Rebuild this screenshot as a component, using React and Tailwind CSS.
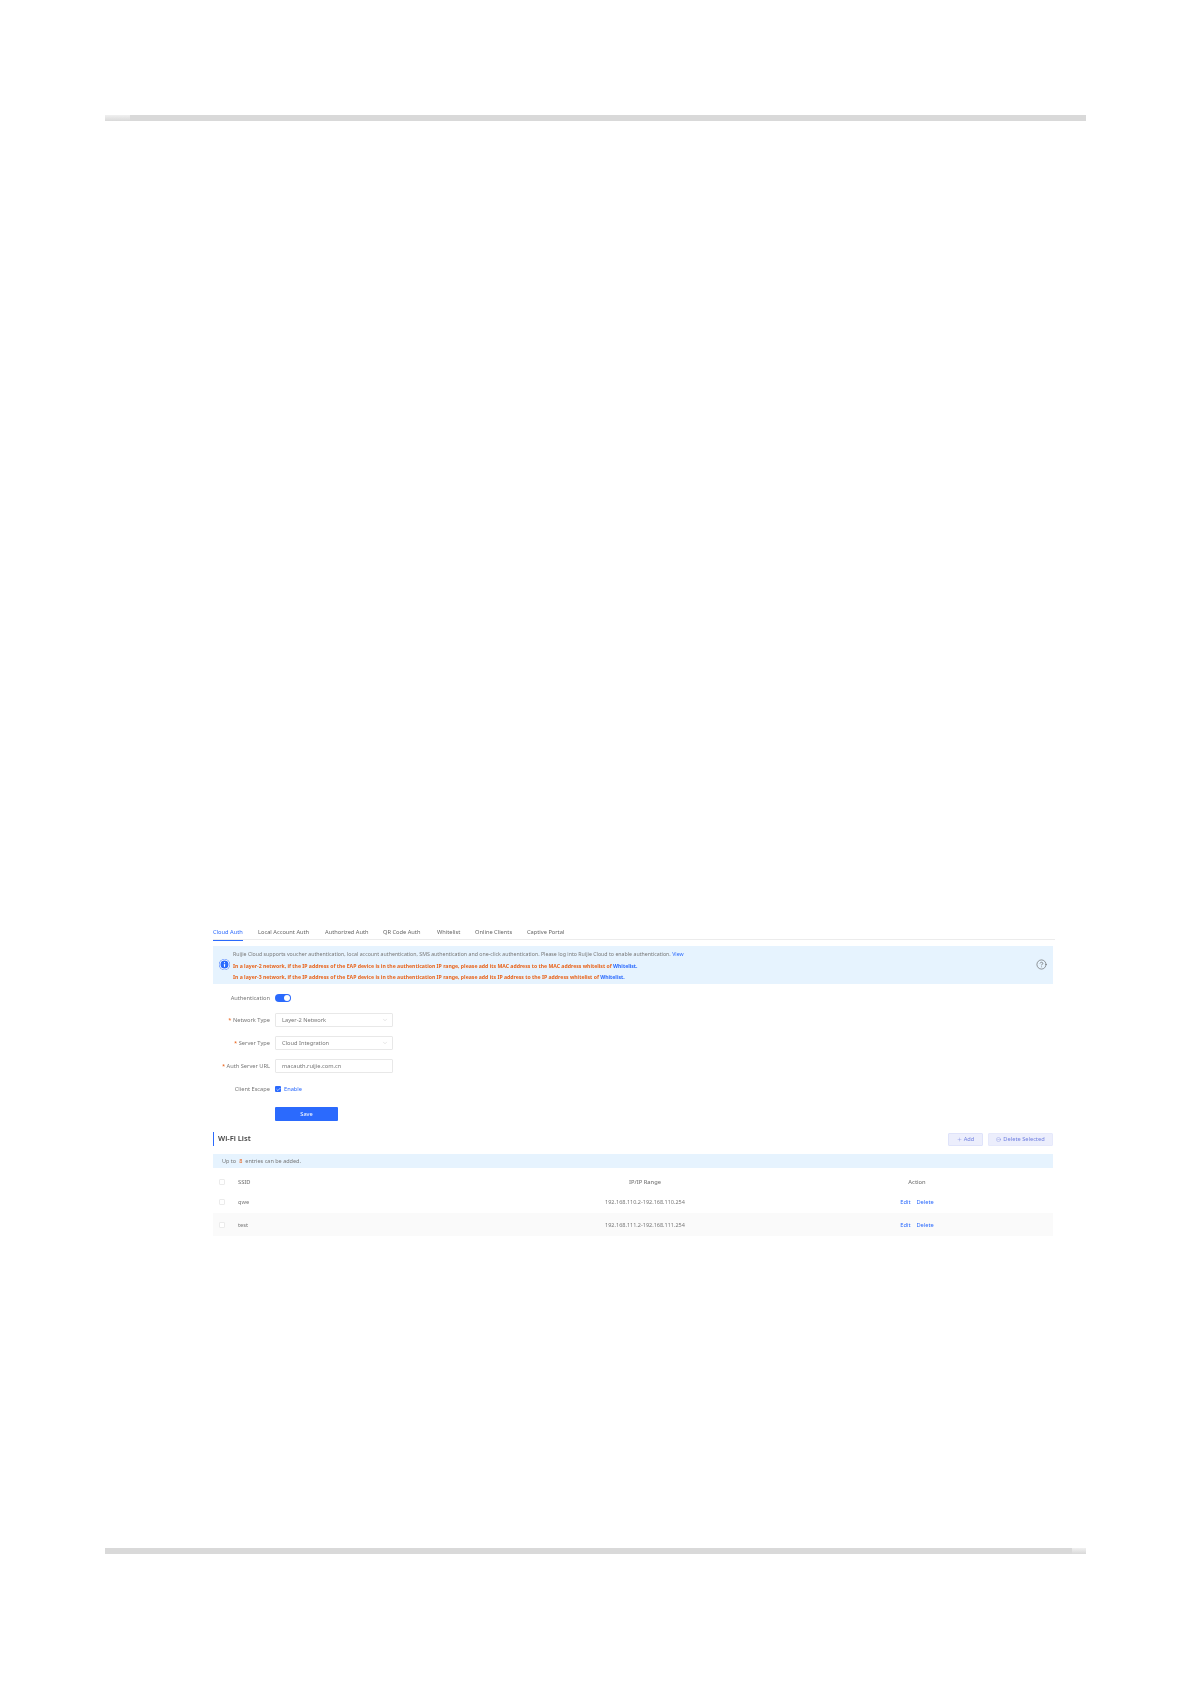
import { ChevronDown, Plus, Check, Info, CircleHelp, CircleMinus } from 'lucide-react';

const tabs = [
  ['Cloud Auth', 'w-[30px] text-[#2b6afd] border-[#2b6afd]'],
  ['Local Account Auth', 'w-[52px] text-[#666] border-transparent'],
  ['Authorized Auth', 'w-[43px] text-[#666] border-transparent'],
  ['QR Code Auth', 'w-[39px] text-[#666] border-transparent'],
  ['Whitelist', 'w-[23px] text-[#666] border-transparent'],
  ['Online Clients', 'w-[37px] text-[#666] border-transparent'],
  ['Captive Portal', 'w-[37px] text-[#666] border-transparent'],
];

const rows = [
  { ssid: 'qwe', range: '192.168.110.2-192.168.110.254', rowClass: 'h-[19px] pb-[3px]' },
  { ssid: 'test', range: '192.168.111.2-192.168.111.254', rowClass: 'h-[23px] bg-[#fafafa]' },
];

function FormRow({ label, required, children, className }) {
  return (
    <div className={`flex items-center ${className}`}>
      <div className="w-[57px] text-right text-[#777] whitespace-nowrap">
        {required && <span className="text-[#e8590c]">* </span>}
        {label}
      </div>
      <div className="ml-[5px] flex items-center">{children}</div>
    </div>
  );
}

function Field({ value, arrow }) {
  return (
    <div className="flex h-[14px] w-[118px] items-center justify-between rounded-[1px] border border-[#e8e8e8] bg-white pl-[6px] pr-[4px] text-[#777]">
      <span>{value}</span>
      {arrow && <ChevronDown size={6} strokeWidth={1.5} className="text-[#bbb]" />}
    </div>
  );
}

function SmallCheck() {
  return <span className="block h-[6px] w-[6px] rounded-[1px] border border-[#ebebeb] bg-white" />;
}

export default function App() {
  return (
    <div className="flex h-[1684px] w-[1191px] flex-col bg-white font-['Noto_Sans',sans-serif] text-[5.7px] leading-[8px]">
      <div className="mx-[105px] mt-[115px] flex h-[6px] bg-[#d9d9d9]">
        <div className="w-[25px] bg-gradient-to-b from-[#f0f0f0] to-[#d9d9d9]" />
      </div>

      <div className="ml-[213px] mr-[138px] mt-[805px] flex-1 blur-[0.4px]">
        {/* tabs */}
        <div className="mr-[-2px] flex h-[14px] gap-[15px] border-b border-[#ececec] pt-[1px]">
          {tabs.map(([name, cls]) => (
            <div key={name} className={`h-[14px] whitespace-nowrap border-b-[1px] pt-[1px] ${cls}`}>
              {name}
            </div>
          ))}
        </div>

        {/* notice */}
        <div className="mt-[6px] flex h-[38px] items-center bg-[#e6f3fe]">
          <Info size={11} strokeWidth={2.5} className="mb-[1px] ml-[5.5px] rounded-full bg-[#2b6afd] text-white" />
          <div className="ml-[3.5px] flex-1 pt-[1px] text-[5.25px]">
            <div className="whitespace-nowrap text-[#777]">
              Ruijie Cloud supports voucher authentication, local account authentication, SMS authentication and one-click authentication. Please log into Ruijie Cloud to enable authentication. <span className="text-[#2b6afd]">View</span>
            </div>
            <div className="mt-[4px] whitespace-nowrap text-[5.15px] font-bold text-[#e8641c]">
              In a layer-2 network, if the IP address of the EAP device is in the authentication IP range, please add its MAC address to the MAC address whitelist of <span className="text-[#2b6afd]">Whitelist.</span>
            </div>
            <div className="mt-[3px] whitespace-nowrap text-[5.15px] font-bold text-[#e8641c]">
              In a layer-3 network, if the IP address of the EAP device is in the authentication IP range, please add its IP address to the IP address whitelist of <span className="text-[#2b6afd]">Whitelist.</span>
            </div>
          </div>
          <CircleHelp size={11} strokeWidth={1.3} className="mb-[1px] mr-[6.5px] text-[#555]" />
        </div>

        {/* form */}
        <FormRow label="Authentication" className="mt-[10px] h-[8px]">
          <div className="flex h-[8px] w-[16px] items-center justify-end rounded-full bg-[#2b6afd] pr-[1px]">
            <span className="h-[6px] w-[6px] rounded-full bg-white" />
          </div>
        </FormRow>
        <FormRow label="Network Type" required className="mt-[11px]">
          <Field value="Layer-2 Network" arrow />
        </FormRow>
        <FormRow label="Server Type" required className="mt-[9px]">
          <Field value="Cloud Integration" arrow />
        </FormRow>
        <FormRow label="Auth Server URL" required className="mt-[9px]">
          <Field value="macauth.ruijie.com.cn" />
        </FormRow>
        <FormRow label="Client Escape" className="mt-[12px] h-[8px]">
          <span className="flex h-[6px] w-[6px] items-center justify-center rounded-[1px] bg-[#2b6afd]">
            <Check size={5} strokeWidth={3} className="text-white" />
          </span>
          <span className="ml-[3px] text-[#2b6afd]">Enable</span>
        </FormRow>
        <div className="ml-[62px] mt-[14px] flex h-[14px] w-[63px] items-center justify-center rounded-[1px] bg-[#2b6afd] text-white">
          Save
        </div>

        {/* wifi list */}
        <div className="mt-[11px] flex h-[14px] items-center justify-between">
          <div className="flex h-[14px] items-center border-l border-[#2b6afd] pb-[2px] pl-[4px] text-[7.5px] font-semibold text-[#444]">
            Wi-Fi List
          </div>
          <div className="flex gap-[5px] text-[#6f7fe0]">
            <div className="flex h-[13px] w-[35px] items-center justify-center gap-[2px] rounded-[1px] border border-[#dfe3fa] bg-[#eceefc]">
              <Plus size={5} strokeWidth={1.5} />
              Add
            </div>
            <div className="flex h-[13px] w-[65px] items-center justify-center gap-[2px] rounded-[1px] border border-[#e6e9fb] bg-[#eceefc]">
              <CircleMinus size={5} strokeWidth={1.5} />
              Delete Selected
            </div>
          </div>
        </div>
        <div className="mt-[8px] flex h-[14px] items-center bg-[#e6f3fe] pl-[9px] text-[5.5px] text-[#777]">
          Up to <span className="mx-[3px] text-[#e8590c]">8</span> entries can be added.
        </div>

        {/* table */}
        <div className="mt-[2px] text-[#777]">
          <div className="flex h-[24px] items-center font-medium">
            <div className="w-[25px] pl-[6px]"><SmallCheck /></div>
            <div className="w-[307px]">SSID</div>
            <div className="w-[200px] text-center">IP/IP Range</div>
            <div className="ml-[117px] w-[110px] text-center">Action</div>
          </div>
          {rows.map((row) => (
            <div key={row.ssid} className={`flex items-center ${row.rowClass}`}>
              <div className="w-[25px] pl-[6px]"><SmallCheck /></div>
              <div className="w-[307px]">{row.ssid}</div>
              <div className="w-[200px] whitespace-nowrap text-center text-[5.5px]">{row.range}</div>
              <div className="ml-[117px] flex w-[110px] justify-center gap-[6px] whitespace-nowrap text-[#2b6afd]">
                <span>Edit</span>
                <span>Delete</span>
              </div>
            </div>
          ))}
        </div>
      </div>

      <div className="mx-[105px] mb-[130px] flex h-[6px] justify-end bg-[#d9d9d9]">
        <div className="w-[14px] bg-gradient-to-b from-[#f0f0f0] to-[#d9d9d9]" />
      </div>
    </div>
  );
}
